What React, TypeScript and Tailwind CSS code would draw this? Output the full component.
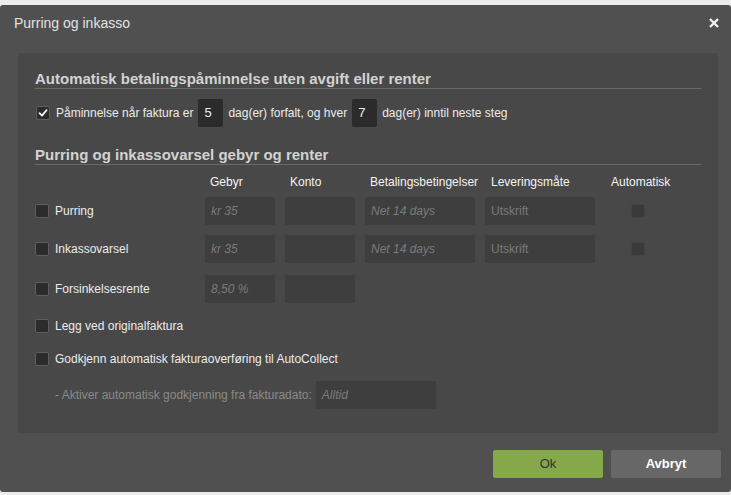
import React from "react";

function Check({ checked = false, className = "" }: { checked?: boolean; className?: string }) {
  return (
    <div
      className={
        "w-[14px] h-[14px] shrink-0 rounded-[2px] border border-[#5e5e5e] bg-[#2c2c2c] flex items-center justify-center " +
        className
      }
    >
      {checked && (
        <svg width="10" height="10" viewBox="0 0 10 10">
          <path d="M1.5 5.2 L4 7.6 L8.6 2.2" stroke="#f2f2f2" strokeWidth="1.8" fill="none" strokeLinecap="round" strokeLinejoin="round" />
        </svg>
      )}
    </div>
  );
}

function Field({ w, text = "", italic = true, className = "" }: { w: string; text?: string; italic?: boolean; className?: string }) {
  return (
    <div
      className={
        "h-[28px] rounded-[2px] bg-[#3e3e3e] flex items-center px-[6px] text-[12px] text-[#7a7a7a] shrink-0 " +
        (italic ? "italic " : "") +
        w +
        " " +
        className
      }
    >
      {text}
    </div>
  );
}

export default function App() {
  return (
    <div className="w-[731px] h-[495px] bg-[#ececec] pt-[5px] font-['Liberation_Sans',Arial,sans-serif]">
      <div className="w-[731px] h-[487px] rounded-[3px] bg-[#505050] flex flex-col">
        <div className="h-[36px] flex items-center justify-between pl-[14px] pr-[12px]">
          <span className="text-[14px] text-[#e2e2e2]">Purring og inkasso</span>
          <svg width="10" height="10" viewBox="0 0 10 10">
            <path d="M1 1 L9 9 M9 1 L1 9" stroke="#f0f0f0" strokeWidth="2.4" />
          </svg>
        </div>

        <div className="mt-[12px] ml-[18px] mr-[13px] bg-[#484848] rounded-[2px] pt-[17px] pl-[17px] pr-[17px] pb-[24px]">
          <div className="text-[15px] leading-[18px] font-bold text-[#d2d2d2] border-b border-[#6a6a6a]">
            Automatisk betalingspåminnelse uten avgift eller renter
          </div>

          <div className="mt-[10px] flex items-center h-[28px] text-[12px] text-[#ececec]">
            <Check checked className="ml-[1px]" />
            <span className="ml-[6px]">Påminnelse når faktura er</span>
            <div className="ml-[5px] w-[25px] h-[28px] rounded-[2px] bg-[#2b2b2b] flex items-center pl-[6px] text-[13px] text-[#eeeeee]">5</div>
            <span className="ml-[5px]">dag(er) forfalt, og hver</span>
            <div className="ml-[5px] w-[25px] h-[28px] rounded-[2px] bg-[#2b2b2b] flex items-center pl-[6px] text-[13px] text-[#eeeeee]">7</div>
            <span className="ml-[5px]">dag(er) inntil neste steg</span>
          </div>

          <div className="mt-[19px] text-[15px] leading-[18px] font-bold text-[#d2d2d2] border-b border-[#6a6a6a]">
            Purring og inkassovarsel gebyr og renter
          </div>

          <div className="mt-[10px] flex items-center h-[14px] text-[12px] text-[#f4f4f4]">
            <div className="w-[170px] shrink-0" />
            <div className="w-[80px] pl-[5px] shrink-0">Gebyr</div>
            <div className="w-[80px] pl-[5px] shrink-0">Konto</div>
            <div className="w-[120px] pl-[5px] shrink-0">Betalingsbetingelser</div>
            <div className="w-[120px] pl-[6px] shrink-0">Leveringsmåte</div>
            <div className="pl-[6px]">Automatisk</div>
          </div>

          <div className="mt-[8px] flex items-center text-[12px] text-[#ececec]">
            <div className="w-[170px] flex items-center shrink-0">
              <Check />
              <span className="ml-[6px]">Purring</span>
            </div>
            <Field w="w-[70px]" text="kr 35" />
            <Field w="w-[70px]" className="ml-[10px]" />
            <Field w="w-[110px]" className="ml-[10px]" text="Net 14 days" />
            <Field w="w-[110px]" className="ml-[10px]" text="Utskrift" italic={false} />
            <Check className="ml-[36px] bg-[#3a3a3a] border-[#444444]" />
          </div>

          <div className="mt-[10px] flex items-center text-[12px] text-[#ececec]">
            <div className="w-[170px] flex items-center shrink-0">
              <Check />
              <span className="ml-[6px]">Inkassovarsel</span>
            </div>
            <Field w="w-[70px]" text="kr 35" />
            <Field w="w-[70px]" className="ml-[10px]" />
            <Field w="w-[110px]" className="ml-[10px]" text="Net 14 days" />
            <Field w="w-[110px]" className="ml-[10px]" text="Utskrift" italic={false} />
            <Check className="ml-[36px] bg-[#3a3a3a] border-[#444444]" />
          </div>

          <div className="mt-[12px] flex items-center text-[12px] text-[#ececec]">
            <div className="w-[170px] flex items-center shrink-0">
              <Check />
              <span className="ml-[6px]">Forsinkelsesrente</span>
            </div>
            <Field w="w-[70px]" text="8,50 %" />
            <Field w="w-[70px]" className="ml-[10px]" />
          </div>

          <div className="mt-[9px] h-[28px] flex items-center text-[12px] text-[#ececec]">
            <Check />
            <span className="ml-[6px]">Legg ved originalfaktura</span>
          </div>

          <div className="mt-[5px] h-[28px] flex items-center text-[12px] text-[#ececec]">
            <Check />
            <span className="ml-[6px]">Godkjenn automatisk fakturaoverføring til AutoCollect</span>
          </div>

          <div className="mt-[8px] flex items-center text-[12px] text-[#8a8a8a]">
            <span className="ml-[20px]">- Aktiver automatisk godkjenning fra fakturadato:</span>
            <Field w="w-[120px]" className="ml-[4px]" text="Alltid" />
          </div>
        </div>

        <div className="mt-[17px] flex justify-end gap-[8px] pr-[10px]">
          <button className="w-[110px] h-[28px] rounded-[2px] bg-[#84a84a] text-[13px] text-[#333333]">Ok</button>
          <button className="w-[110px] h-[28px] rounded-[2px] bg-[#676767] text-[13px] font-bold text-white">Avbryt</button>
        </div>
      </div>
    </div>
  );
}
